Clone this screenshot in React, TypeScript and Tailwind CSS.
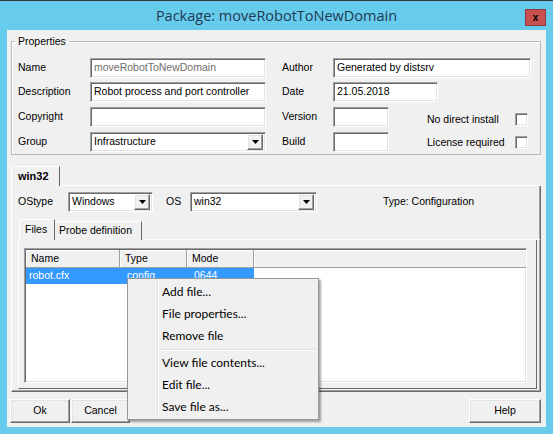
import React from 'react';

const sunken =
  "border border-t-[#a0a0a0] border-l-[#a0a0a0] border-b-white border-r-white shadow-[inset_1px_1px_0_#696969,inset_-1px_-1px_0_#e3e3e3]";
const raised =
  "border border-t-white border-l-white border-b-[#696969] border-r-[#696969] shadow-[inset_-1px_-1px_0_#a0a0a0,inset_1px_1px_0_#e3e3e3]";

const Field: React.FC<{ className: string; value?: string; muted?: boolean }> = ({ className, value, muted }) => (
  <div className={`${sunken} ${className} h-[20px] bg-white flex items-center pl-[3px] whitespace-nowrap overflow-hidden ${muted ? 'text-[#6d6d6d]' : ''}`}>
    {value}
  </div>
);

const DropArrow = () => (
  <div className={`${raised} w-[16px] h-[16px] bg-[#f0f0f0] flex items-center justify-center shrink-0`}>
    <svg width="7" height="4" viewBox="0 0 7 4">
      <path d="M0 0h7L3.5 4z" fill="#000" />
    </svg>
  </div>
);

const Combo: React.FC<{ className: string; value: string }> = ({ className, value }) => (
  <div className={`${sunken} ${className} h-[20px] bg-white flex items-center pl-[3px] pr-[2px]`}>
    <span className="flex-1 whitespace-nowrap">{value}</span>
    <DropArrow />
  </div>
);

const Check = () => <div className={`${sunken} w-[13px] h-[13px] bg-white shrink-0`} />;

const Button: React.FC<{ className: string; label: string }> = ({ className, label }) => (
  <div className={`${raised} ${className} h-[24px] bg-[#f0f0f0] flex items-center justify-center`}>{label}</div>
);

const menuItems = [
  ['Add file...', 'File properties...', 'Remove file'],
  ['View file contents...', 'Edit file...', 'Save file as...'],
];

export default function App() {
  return (
    <div className="w-[553px] h-[434px] bg-[#67cbeb] border-t border-[#3a3a3a] flex flex-col relative overflow-hidden font-['Liberation_Sans',Arial,sans-serif] text-[10.5px] text-black">
      {/* title bar */}
      <div className="h-[29px] flex items-center justify-center">
        <span className="font-['Open_Sans',sans-serif] text-[14.5px] text-[#1e3a56]">Package: moveRobotToNewDomain</span>
      </div>
      <div className="absolute right-[7px] top-[8px] w-[21px] h-[17px] bg-[#c75050] border border-[#8f3b3b] flex items-center justify-center font-bold text-[10px] leading-none">
        x
      </div>

      {/* client */}
      <div className="mx-[7px] h-[397px] bg-[#f0f0f0] flex flex-col">
        <fieldset className="ml-[4px] mr-[5px] mt-[5px] h-[120px] border border-[#b9b9b9] shadow-[inset_1px_1px_0_#fff] pl-[6px] pr-0 pb-[3px]">
          <legend className="-ml-[3px] px-[3px] leading-[13px]">Properties</legend>
          <div className="mt-[10px] flex flex-col gap-[4px]">
            <div className="flex items-center">
              <span className="w-[72px]">Name</span>
              <Field className="w-[176px]" value="moveRobotToNewDomain" muted />
              <span className="ml-[16px] w-[51px]">Author</span>
              <Field className="w-[198px]" value="Generated by distsrv" />
            </div>
            <div className="flex items-center">
              <span className="w-[72px]">Description</span>
              <Field className="w-[176px]" value="Robot process and port controller" />
              <span className="ml-[16px] w-[51px]">Date</span>
              <Field className="w-[105px]" value="21.05.2018" />
            </div>
            <div className="flex items-center">
              <span className="w-[72px]">Copyright</span>
              <Field className="w-[176px]" />
              <span className="ml-[16px] w-[51px]">Version</span>
              <Field className="w-[56px]" />
              <div className="ml-[38px] mt-[6px] flex items-center">
                <span className="w-[88px]">No direct install</span>
                <Check />
              </div>
            </div>
            <div className="flex items-center">
              <span className="w-[72px]">Group</span>
              <Combo className="w-[176px]" value="Infrastructure" />
              <span className="ml-[16px] w-[51px]">Build</span>
              <Field className="w-[56px]" />
              <div className="ml-[38px] mt-[2px] flex items-center">
                <span className="w-[88px]">License required</span>
                <Check />
              </div>
            </div>
          </div>
        </fieldset>

        {/* win32 tab */}
        <div className="mt-[11px] ml-[4px] mr-[5px] h-[20px] flex">
          <div className="w-[49px] border-t border-l border-white border-r border-r-[#696969] font-bold text-[11px] pl-[6px] flex items-center">
            win32
          </div>
          <div className="flex-1 border-b border-white" />
        </div>
        <div className="ml-[4px] mr-[5px] h-[206px] border-l border-white border-r border-r-[#696969] border-b border-b-[#696969] shadow-[inset_-1px_-1px_0_#a0a0a0] pt-[6px] pl-[6px] flex flex-col">
          <div className="flex items-center">
            <span className="w-[50px]">OStype</span>
            <Combo className="w-[85px]" value="Windows" />
            <span className="ml-[13px] w-[24px]">OS</span>
            <Combo className="w-[127px]" value="win32" />
            <span className="ml-[66px]">Type: Configuration</span>
          </div>

          {/* inner tabs */}
          <div className="mt-[7px] ml-[1px] h-[21px] flex items-end">
            <div className="w-[36px] h-[21px] border-t border-l border-white border-r border-r-[#696969] pl-[5px] flex items-center">
              Files
            </div>
            <div className="w-[87px] h-[19px] border-t border-white border-r border-r-[#696969] pl-[4px] flex items-center">
              Probe definition
            </div>
            <div className="flex-1 border-b border-white" />
          </div>
          <div className="mr-[3px] h-[149px] border-l border-white border-r border-r-[#696969] border-b border-b-[#696969] pt-[8px] pl-[5px] pr-[9px]">
            <div className={`${sunken} h-[135px] bg-white flex flex-col`}>
              <div className="flex h-[18px] mt-[1px] ml-[1px]">
                {[
                  ['Name', 'w-[94px]'],
                  ['Type', 'w-[67px]'],
                  ['Mode', 'w-[67px]'],
                ].map(([t, w]) => (
                  <div key={t} className={`${w} bg-[#f0f0f0] border-r border-b border-[#a0a0a0] shadow-[inset_1px_1px_0_#fff] pl-[5px] flex items-center`}>
                    {t}
                  </div>
                ))}
                <div className="flex-1 bg-[#f0f0f0] border-b border-[#a0a0a0] shadow-[inset_1px_1px_0_#fff]" />
              </div>
              <div className="flex h-[16px] ml-[1px]">
                <div className="w-[228px] bg-[#3399ff] text-white flex items-center">
                  <span className="w-[94px] pl-[3px]">robot.cfx</span>
                  <span className="w-[67px] pl-[7px]">config</span>
                  <span className="w-[67px] pl-[7px]">0644</span>
                </div>
              </div>
            </div>
          </div>
        </div>

        {/* buttons */}
        <div className="mt-[7px] flex pl-[3px] pr-[5px]">
          <Button className="w-[60px]" label="Ok" />
          <Button className="w-[59px] ml-[1px]" label="Cancel" />
          <Button className="w-[72px] ml-auto" label="Help" />
        </div>
      </div>

      {/* context menu */}
      <div className="absolute left-[127px] top-[277px] w-[192px] h-[142px] bg-[#f0f0f0] border border-[#979797] shadow-[2px_2px_2px_rgba(0,0,0,0.35)] flex font-['Lato',sans-serif] text-[12px]">
        <div className="w-[30px] border-r border-[#e2e3e3]" />
        <div className="flex-1 border-l border-white pt-[2px] flex flex-col">
          {menuItems.map((group, gi) => (
            <React.Fragment key={gi}>
              {gi > 0 && (
                <div className="h-[5px] flex items-center pr-[2px]">
                  <div className="w-full h-[2px] border-t border-[#e0e0e0] border-b border-b-white" />
                </div>
              )}
              {group.map(item => (
                <div key={item} className="h-[22px] flex items-center pl-[3px]">
                  {item}
                </div>
              ))}
            </React.Fragment>
          ))}
        </div>
      </div>
    </div>
  );
}
